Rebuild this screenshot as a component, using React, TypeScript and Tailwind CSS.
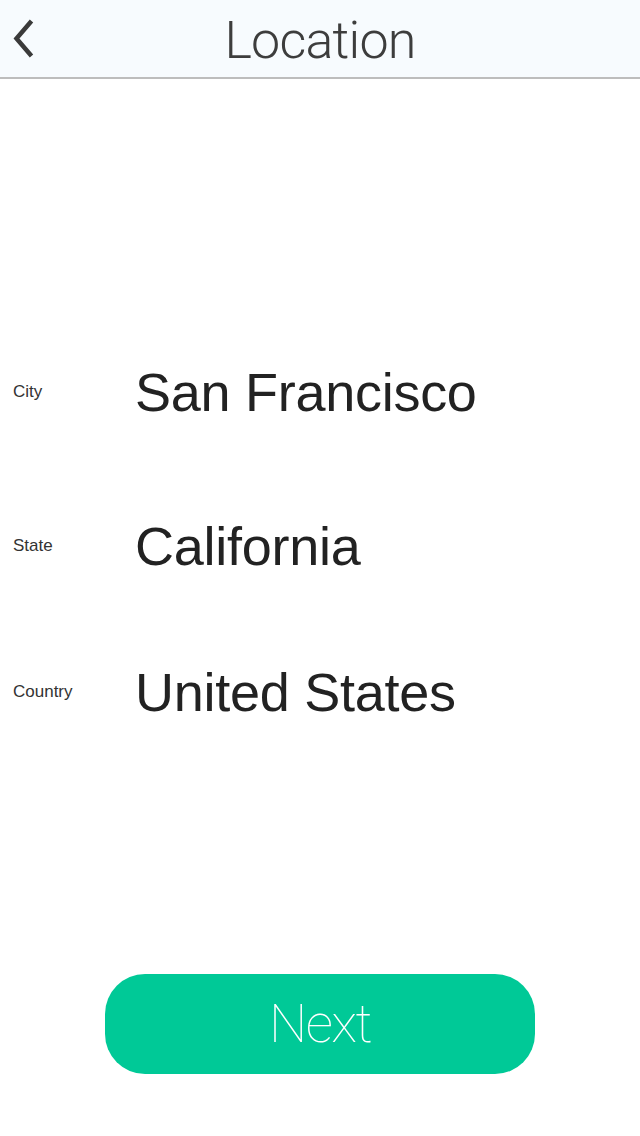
import React from 'react'

type Field = {
  label: string;
  value: string;
  spacing: string;
};

const fields: Field[] = [
  { label: 'City', value: 'San Francisco', spacing: 'mt-[273px]' },
  { label: 'State', value: 'California', spacing: 'mt-[74px]' },
  { label: 'Country', value: 'United States', spacing: 'mt-[66px]' },
];

const BackIcon = () => (
  <svg width="24" height="40" viewBox="0 0 24 40" fill="none">
    <path d="M19.5 3 L4.5 20.5 L19.5 38" stroke="#3a3a3a" strokeWidth="4.5" strokeLinecap="butt" strokeLinejoin="miter" />
  </svg>
)

const App = () => {
  return (
    <div className="w-[640px] h-[1136px] bg-white flex flex-col font-['Liberation_Sans',Arial,sans-serif]">
      <header className="relative h-[79px] bg-[#f7fbfe] border-b-2 border-[#bdbdbd] flex items-center justify-center shrink-0">
        <button className="absolute left-[12px] top-[18px]">
          <BackIcon />
        </button>
        <h1 className="text-[52px] leading-none text-[#3d3d3d] font-light font-['Roboto',sans-serif] tracking-[-0.015em] mt-[4px]">
          Location
        </h1>
      </header>

      <div className="flex flex-col">
        {fields.map((field) => (
          <div key={field.label} className={`flex items-center h-[80px] ${field.spacing}`}>
            <span className="w-[135px] pl-[13px] text-[17px] text-[#333]">{field.label}</span>
            <span className="text-[54px] leading-none text-[#222] tracking-[-0.005em]">{field.value}</span>
          </div>
        ))}
      </div>

      <div className="flex justify-center mt-[242px]">
        <button className="w-[430px] h-[100px] rounded-[40px] bg-[#00c997] flex items-center justify-center">
          <span className="text-[54px] leading-none text-white font-thin font-['Roboto',sans-serif] tracking-[-0.03em]">
            Next
          </span>
        </button>
      </div>
    </div>
  )
}

export default App
